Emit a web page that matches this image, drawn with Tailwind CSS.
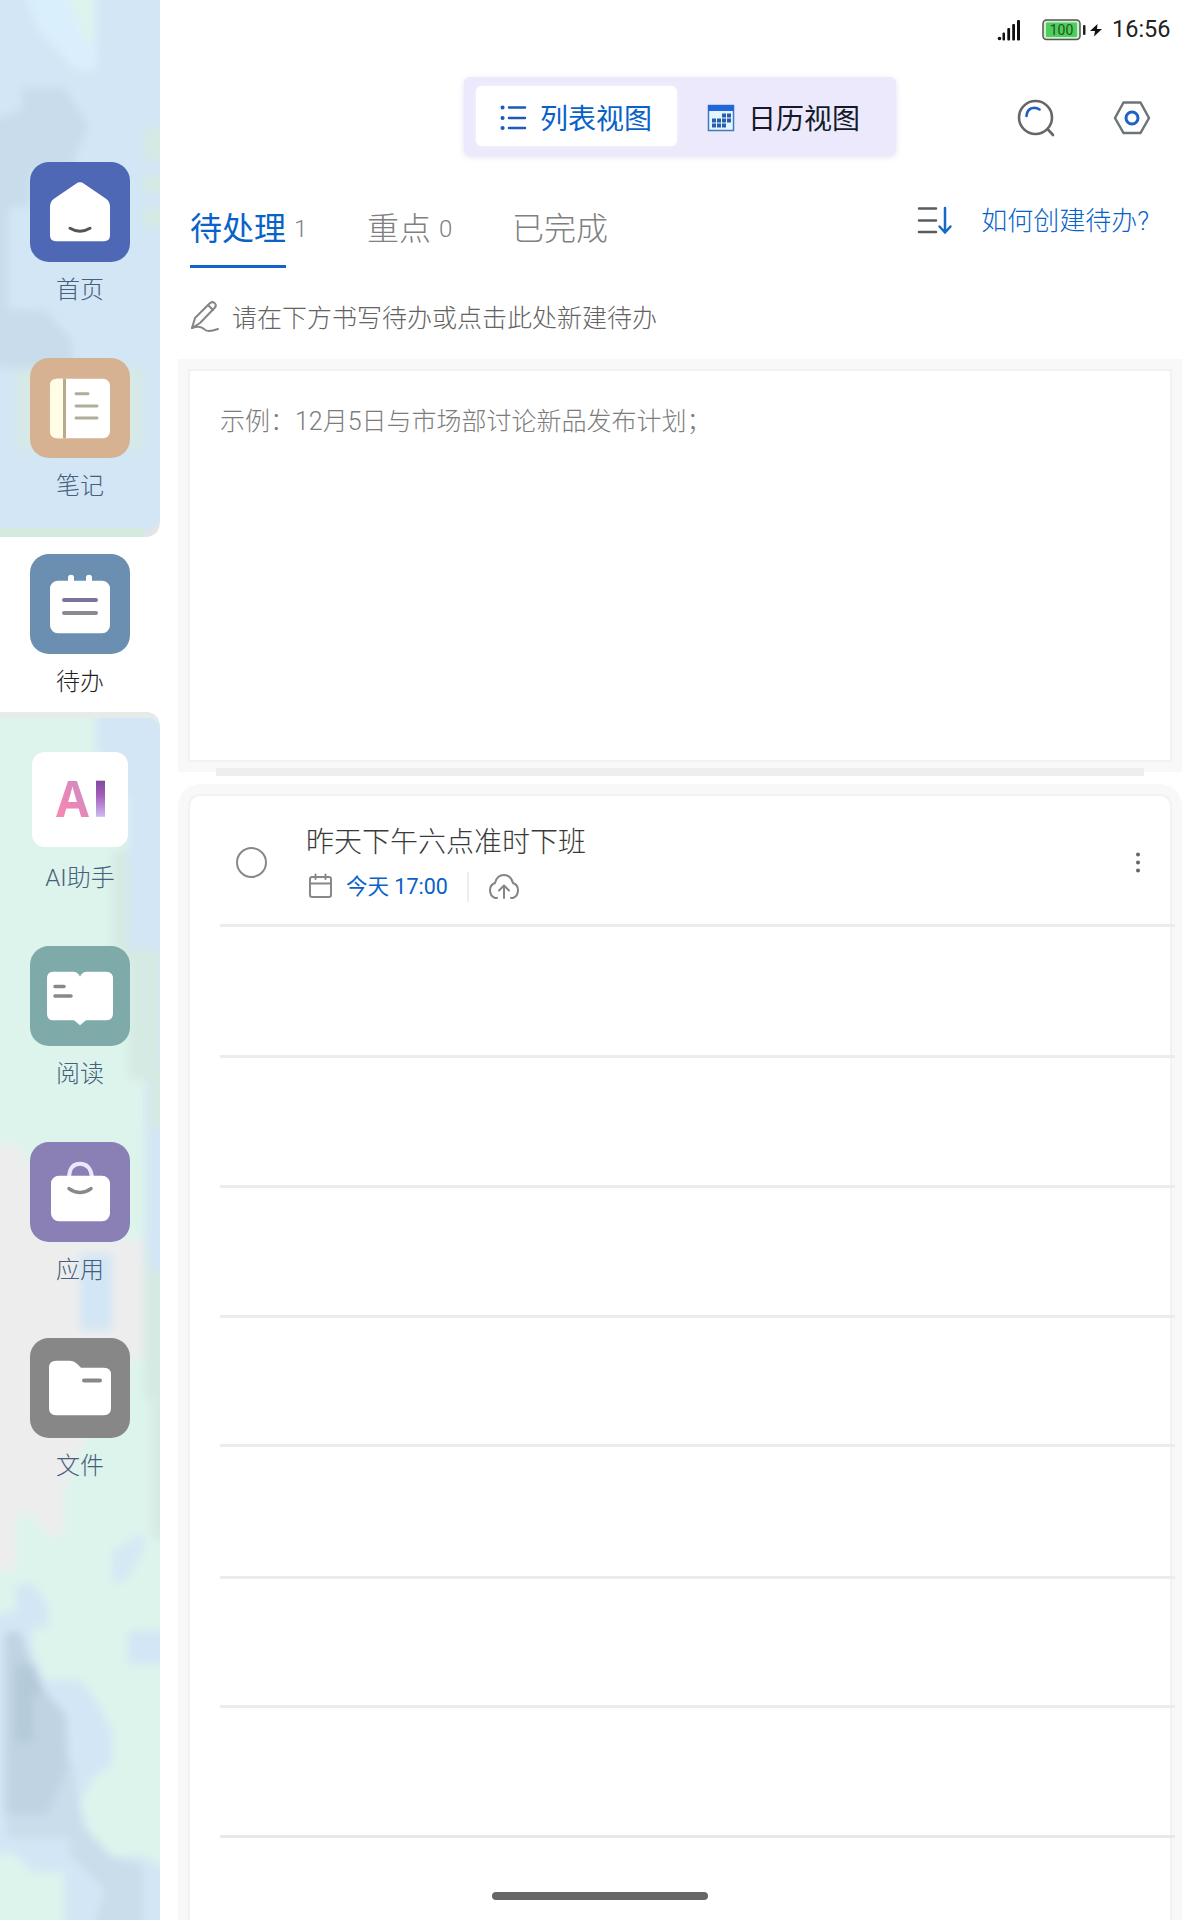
<!DOCTYPE html>
<html lang="zh-CN">
<head>
<meta charset="utf-8">
<title>待办</title>
<script src="https://cdn.jsdelivr.net/npm/@tailwindcss/browser@4"></script>
</head>
<body class="w-[1200px] h-[1920px] overflow-hidden bg-white font-['Roboto','Noto_Sans_CJK_SC',sans-serif] font-light">
<div class="flex h-[1920px] w-[1200px]">
  <!-- Sidebar -->
  <nav class="relative w-[160px] shrink-0 pt-[145px] text-[24px] text-[#46607c]">
    <svg class="absolute inset-0" width="160" height="1920" viewBox="0 0 160 1920">
      <defs>
        <clipPath id="panel"><path d="M0 0H160V520Q160 537 144 537H0ZM0 712H144Q160 712 160 728V1920H0Z"/></clipPath>
        <filter id="soft" x="-50%" y="-50%" width="200%" height="200%"><feGaussianBlur stdDeviation="4"/></filter>
      </defs>
      <g clip-path="url(#panel)">
        <rect width="160" height="1920" fill="#d3e6f5"/>
        <g filter="url(#soft)">
          <path d="M24 -10L96 -10V70H76L40 32Z" fill="#daeffc"/>
          <path d="M66 -10H94V40H84Z" fill="#dcf4ed"/>
          <path d="M-20 125L22 110V88H64L88 125L72 165L30 172V205L8 208V310H44L72 340V370H30L-20 364Z" fill="#c8dceb"/>
          <path d="M144 128h30v32h-30zM144 176h30v16h-30zM144 208h30v18h-30z" fill="#d5eae2"/>
          <path d="M16 368H144V450H16Z" fill="#d5e9e6"/>
          <path d="M-30 700H96V750L128 800V960L145 1080V1240L180 1400V1950H-30Z" fill="#ddf4ec"/>
          <path d="M112 850H128V950H160V1070H175V1130H150V1080H128V960H112Z" fill="#d5eae2"/>
          <path d="M144 1240H175V1540H152V1400H144Z" fill="#d5eae2"/>
          <path d="M-30 1144H20L60 1240H144V1360H110L90 1430L64 1490V1535H48L32 1515H16V1570H-30Z" fill="#ededee"/>
          <path d="M80 1254h32v76h-32z" fill="#d2e6f5"/>
          <path d="M148 1130h30v140h-30z" fill="#d2e6f5"/>
          <path d="M16 1584H32L48 1605V1628H32V1650L46 1680H80L96 1700L112 1730V1765L96 1775L80 1800L88 1830L112 1856H144L170 1872V1940H64V1872H32L16 1855L-20 1850V1620L16 1610Z" fill="#d3e6f5"/>
          <path d="M128 1631h40v33h-40z" fill="#d2e6f5"/>
          <path d="M112 1552L144 1532V1550L126 1582H112Z" fill="#d4e9f4"/>
          <path d="M5 1800L72 1760L82 1825L112 1857L143 1865V1940H90L105 1890L70 1855V1838H8Z" fill="#c9ddeb"/>
          <path d="M5 1632H20L32 1665L44 1690L66 1715L68 1765L48 1814H5Z" fill="#bfd3e2"/>
          <path d="M16 1665H34L44 1694L32 1696V1742H16Z" fill="#b4cad9"/>
        </g>
        <path d="M0 528H144V537H0Z" fill="#d4eadf"/>
        <path d="M144 537V532Q154 529 159 520V537Z" fill="#e2e5e7"/>
        <path d="M0 712H144Q156 712 159 724L152 718H0Z" fill="#e6eae9"/>
      </g>
    </svg>
    <div class="relative">
      <a class="flex h-[196px] flex-col items-center pt-[17px]">
        <svg class="shrink-0" width="100" height="100" viewBox="0 0 100 101" preserveAspectRatio="none"><rect width="100" height="101" rx="19" fill="#4e68b6"/><path d="M46 22Q50 19 54 22L76 37Q80 40 80 45V74Q80 80 74 80H26Q20 80 20 74V45Q20 40 24 37Z" fill="#fff"/><path d="M40 67Q50 73 60 67" fill="none" stroke="#555" stroke-width="3" stroke-linecap="round"/></svg>
        <span class="mt-[10px] leading-[36px]">首页</span>
      </a>
      <a class="flex h-[196px] flex-col items-center pt-[17px]">
        <svg class="shrink-0" width="100" height="100" viewBox="0 0 100 101" preserveAspectRatio="none"><rect width="100" height="101" rx="19" fill="#d6b293"/><rect x="20" y="21" width="60" height="60" rx="7" fill="#fff"/><path d="M33 21H27Q20 21 20 28V74Q20 81 27 81H33Z" fill="#fffde5"/><path d="M34.500 21V81" stroke="#b9a98f" stroke-width="3"/><path d="M46 36H58M46 48.500H67M46 60.500H67" stroke="#b0ad98" stroke-width="3" stroke-linecap="round"/></svg>
        <span class="mt-[10px] leading-[36px]">笔记</span>
      </a>
      <a class="flex h-[196px] flex-col items-center pt-[17px] text-[#222]">
        <svg class="shrink-0" width="100" height="100" viewBox="0 0 100 101" preserveAspectRatio="none"><rect width="100" height="101" rx="19" fill="#6b8fb0"/><rect x="20" y="27" width="60" height="53" rx="8" fill="#fff"/><path d="M41 24V30M59 24V30" stroke="#fff" stroke-width="6" stroke-linecap="round"/><path d="M34 46.500H66" stroke="#77759d" stroke-width="4" stroke-linecap="round"/><path d="M34 59.500H66" stroke="#8a8a90" stroke-width="4" stroke-linecap="round"/></svg>
        <span class="mt-[10px] leading-[36px]">待办</span>
      </a>
      <a class="flex h-[196px] flex-col items-center pt-[17px]">
        <svg class="shrink-0" width="100" height="100" viewBox="0 0 100 101" preserveAspectRatio="none"><defs><linearGradient id="aiPink" x1="0" y1="1" x2="0.6" y2="0"><stop offset="0" stop-color="#ff8fa8"/><stop offset="0.45" stop-color="#ec86b6"/><stop offset="1" stop-color="#c58fc6"/></linearGradient><linearGradient id="aiPurple" x1="0" y1="0" x2="0" y2="1"><stop offset="0" stop-color="#7c4b9c"/><stop offset="0.4" stop-color="#a45cbc"/><stop offset="1" stop-color="#cdbaf0"/></linearGradient></defs><rect x="2" y="2" width="96" height="96" rx="13" fill="#fff"/><text x="26" y="67.500" font-family="Open Sans" font-weight="700" font-size="51" textLength="33" lengthAdjust="spacingAndGlyphs" fill="url(#aiPink)">A</text><rect x="66" y="31" width="9" height="36.500" fill="url(#aiPurple)"/></svg>
        <span class="mt-[10px] leading-[36px]">AI助手</span>
      </a>
      <a class="flex h-[196px] flex-col items-center pt-[17px]">
        <svg class="shrink-0" width="100" height="100" viewBox="0 0 100 101" preserveAspectRatio="none"><rect width="100" height="101" rx="19" fill="#7eaaa9"/><path d="M23 26H43Q48 26 50 31Q52 26 57 26H76Q83 26 83 33V68Q83 75 76 75H56L50 80L44 75H23Q17 75 17 68V33Q17 26 23 26Z" fill="#fff"/><path d="M25 41H34M25 50.500H41" stroke="#888" stroke-width="3.500" stroke-linecap="round"/></svg>
        <span class="mt-[10px] leading-[36px]">阅读</span>
      </a>
      <a class="flex h-[196px] flex-col items-center pt-[17px]">
        <svg class="shrink-0" width="100" height="100" viewBox="0 0 100 101" preserveAspectRatio="none"><rect width="100" height="101" rx="19" fill="#8a80b6"/><path d="M39 35Q40 22 50 22Q60 22 62 35" fill="none" stroke="#eee6fd" stroke-width="4"/><rect x="21" y="34" width="59" height="46" rx="8" fill="#fff"/><path d="M39 47Q50 55 61 47" fill="none" stroke="#888" stroke-width="3.500" stroke-linecap="round"/></svg>
        <span class="mt-[10px] leading-[36px]">应用</span>
      </a>
      <a class="flex h-[196px] flex-col items-center pt-[17px]">
        <svg class="shrink-0" width="100" height="100" viewBox="0 0 100 101" preserveAspectRatio="none"><rect width="100" height="101" rx="19" fill="#878787"/><path d="M26 23H40Q44 23 47 26L51 30H74Q81 30 81 37V71Q81 78 74 78H26Q19 78 19 71V30Q19 23 26 23Z" fill="#fff"/><path d="M54 43H70" stroke="#888" stroke-width="4" stroke-linecap="round"/></svg>
        <span class="mt-[10px] leading-[36px]">文件</span>
      </a>
    </div>
  </nav>

  <main class="flex h-[1920px] w-[1040px] flex-col">
    <!-- Status bar -->
    <div class="flex h-[60px] shrink-0 items-center justify-end pr-[28px] text-[24px] font-normal text-[#222]">
      <svg width="24" height="22" viewBox="0 0 24 22" fill="#111"><circle cx="2.500" cy="19.500" r="1.800"/><rect x="5.500" y="13.500" width="2.500" height="8" rx="1"/><rect x="10.300" y="9" width="2.800" height="12.500" rx="1"/><rect x="15.200" y="5" width="2.800" height="16.500" rx="1"/><rect x="20" y="1" width="3" height="20.500" rx="1"/></svg>
      <svg class="ml-[21px]" width="44" height="22" viewBox="0 0 44 22"><rect x="1" y="1" width="37" height="19.500" rx="3.500" fill="#c9f2cd" stroke="#555" stroke-width="1.500"/><rect x="4" y="3.500" width="31" height="14.500" rx="1" fill="#52cc5d"/><rect x="41" y="6" width="2.500" height="10" rx="1" fill="#222"/><text x="19.500" y="16" text-anchor="middle" font-family="Roboto" font-size="14" fill="#185a20">100</text></svg>
      <svg class="ml-[4px]" width="12" height="16" viewBox="0 0 12 16" fill="#111"><path d="M7.500 2L0 9H5L4 14.500L12 7H7Z"/></svg>
      <span class="ml-[10px] w-[60px] text-[23.500px]">16:56</span>
    </div>

    <!-- View switch -->
    <header class="flex h-[116px] shrink-0 items-start justify-end pr-[49px] pt-[17px]">
      <div class="mr-[120px] flex h-[78px] w-[432px] items-center rounded-[6px] bg-[#ebe9fb] px-[12px] text-[28px] font-normal shadow-[0_2px_6px_#e2e0f3]">
        <button class="flex h-[60px] w-[201px] items-center rounded-[6px] bg-white pl-[24px] font-light text-[#0962c8] shadow-[0_0_4px_#f5f4fd]">
          <svg class="mt-[3px]" width="27" height="28" viewBox="0 0 27 28" stroke="#185bb8" stroke-width="2.500" stroke-linecap="round"><path d="M9 3.500H25M9 14H25M9 24H25"/><path d="M2.500 3.500h.1M2.500 14h.1M2.500 24h.1" stroke-width="4"/></svg>
          <span class="relative top-[4px] ml-[13px] whitespace-nowrap font-normal">列表视图</span>
        </button>
        <button class="flex h-[60px] items-center pl-[30px] text-[#15192a]">
          <svg class="mt-[4px]" width="28" height="28" viewBox="0 0 28 28"><rect x="1.500" y="1.500" width="25" height="25" fill="#e6f6ff" stroke="#4479c0" stroke-width="1.500"/><rect x="1" y="1" width="26" height="6" fill="#1f67da"/><g fill="#285fad"><path d="M15 9.500h4v4h-4zM20 9.500h4v4h-4zM5 14.500h4v4H5zM10 14.500h4v4h-4zM15 14.500h4v4h-4zM20 14.500h4v4h-4zM5 19.500h4v4H5zM10 19.500h4v4h-4zM15 19.500h4v4h-4z"/></g></svg>
          <span class="relative top-[4px] ml-[13px] whitespace-nowrap">日历视图</span>
        </button>
      </div>
      <svg class="mt-[22px]" width="40" height="40" viewBox="0 0 40 40" fill="none" stroke-width="2.600" stroke-linecap="round"><circle cx="19.500" cy="18.500" r="16.500" stroke="#666"/><path d="M31.500 30L37 36" stroke="#666"/><path d="M10.500 17Q11 9 18.500 8.700Q21 8.700 23.500 10.500" stroke="#1d5ec0"/></svg>
      <svg class="ml-[57px] mt-[23px]" width="38" height="36" viewBox="0 0 38 36" fill="none"><path d="M10.500 2.500H27.500L36 18L27.500 33H10.500L2 18Z" stroke="#6c7478" stroke-width="2.500" stroke-linejoin="round"/><circle cx="19" cy="18" r="6" stroke="#1d62c4" stroke-width="3"/></svg>
    </header>

    <!-- Filter tabs -->
    <div class="flex h-[92px] shrink-0 pl-[30px] text-[32px] leading-[46px] text-[#808080]">
      <div class="flex w-[177px] pt-[30px]">
        <span class="h-[62px] border-b-[3px] border-[#1262cf] font-normal text-[#0962c8]">待处理</span>
        <span class="ml-[8px] text-[24px]">1</span>
      </div>
      <div class="flex w-[145px] pt-[30px]"><span>重点</span><span class="ml-[8px] text-[24px]">0</span></div>
      <div class="w-[110px] pt-[30px]">已完成</div>
      <div class="ml-auto flex items-center pr-[51px] pb-[4px] text-[26px] text-[#0962c8]">
        <svg width="36" height="30" viewBox="0 0 36 30" fill="none" stroke-width="2.500" stroke-linecap="round"><path d="M2 3.500H19M2 15.500H19M2 27H19" stroke="#5c5c5c"/><path d="M28 3V27M22.500 21.500L28 27.500L33.500 21.500" stroke="#1769c8"/></svg>
        <span class="relative top-[1px] ml-[28px]">如何创建待办?</span>
      </div>
    </div>

    <div class="flex h-[103px] shrink-0 items-start pl-[30px] pt-[32px] text-[25px] leading-[37px] text-[#636363]">
      <svg width="31" height="33" viewBox="0 0 31 33" fill="none" stroke="#858585" stroke-width="2" stroke-linecap="round" stroke-linejoin="round"><path d="M2 28L5 18L20 3Q23 1 25 3.500Q27 6 24 8.500L10 23Z"/><path d="M19 6L23 10"/><path d="M2 28Q10 25 14 29Q17 33 28 29"/></svg>
      <span class="ml-[11px]">请在下方书写待办或点击此处新建待办</span>
    </div>

    <!-- Writing area -->
    <section class="ml-[30px] h-[389px] w-[980px] shrink-0 bg-white pl-[30px] pt-[32px] text-[25px] leading-[37px] text-[#7c7c7c] shadow-[0_0_0_2px_#f2f2f2,0_0_0_12px_#f8f8f8]">示例：12月5日与市场部讨论新品发布计划；</section>
    <div class="relative z-10 mx-auto h-[8px] w-[928px] shrink-0 translate-y-[8px] bg-[#eeeeee]"></div>

    <!-- Task list -->
    <section class="ml-[30px] mt-[28px] h-[1124px] w-[980px] shrink-0 rounded-t-[10px] bg-white shadow-[0_0_0_2px_#f2f2f2,0_0_0_12px_#f8f8f8]">
      <div class="relative z-10 ml-[30px] w-[955px]">
        <div class="flex h-[131px] items-start border-b-[3px] border-[#ececec] pl-[16px] pr-[34px]">
          <div class="mt-[51px] size-[31px] rounded-full border-2 border-[#888]"></div>
          <div class="ml-[39px] pt-[27px]">
            <div class="text-[28px] leading-[40px] text-[#3a3a3a]">昨天下午六点准时下班</div>
            <div class="mt-[8px] flex h-[32px] items-center text-[22px] text-[#0962c8]">
              <svg class="ml-[2px] -mt-[3px]" width="25" height="26" viewBox="0 0 25 26" fill="none" stroke="#888" stroke-width="2" stroke-linecap="round"><rect x="2" y="4" width="21" height="20" rx="2"/><path d="M2 10.500H23M7.500 1.500V6M17.500 1.500V6"/></svg>
              <span class="ml-[13px] text-[21.500px] font-normal">今天 17:00</span>
              <span class="ml-[19px] h-[30px] w-[2px] bg-[#eee]"></span>
              <svg class="ml-[19px] -mt-[1px]" width="32" height="28" viewBox="0 0 32 28" fill="none" stroke="#858585" stroke-width="2" stroke-linecap="round" stroke-linejoin="round"><path d="M9 25H7Q2 23 2 17Q2 12 7 10Q9 2 16 2Q23 2 25 10Q30 12 30 17Q30 23 25 25H23"/><path d="M16 25V13M11 17.500L16 12.500L21 17.500"/></svg>
            </div>
          </div>
          <svg class="ml-auto mt-[55px]" width="6" height="24" viewBox="0 0 6 24" fill="#666"><circle cx="3" cy="3.500" r="2"/><circle cx="3" cy="11.500" r="2"/><circle cx="3" cy="19.500" r="2"/></svg>
        </div>
        <div class="h-[131px] border-b-[3px] border-[#ececec]"></div>
        <div class="h-[130px] border-b-[3px] border-[#ececec]"></div>
        <div class="h-[130px] border-b-[3px] border-[#ececec]"></div>
        <div class="h-[129px] border-b-[3px] border-[#ececec]"></div>
        <div class="h-[132px] border-b-[3px] border-[#ececec]"></div>
        <div class="h-[129px] border-b-[3px] border-[#ececec]"></div>
        <div class="h-[130px] border-b-[3px] border-[#e8e8e8]"></div>
      </div>
      <div class="ml-[302px] mt-[54px] h-[8px] w-[216px] rounded-full bg-[#666]"></div>
    </section>
  </main>
</div>
</body>
</html>
